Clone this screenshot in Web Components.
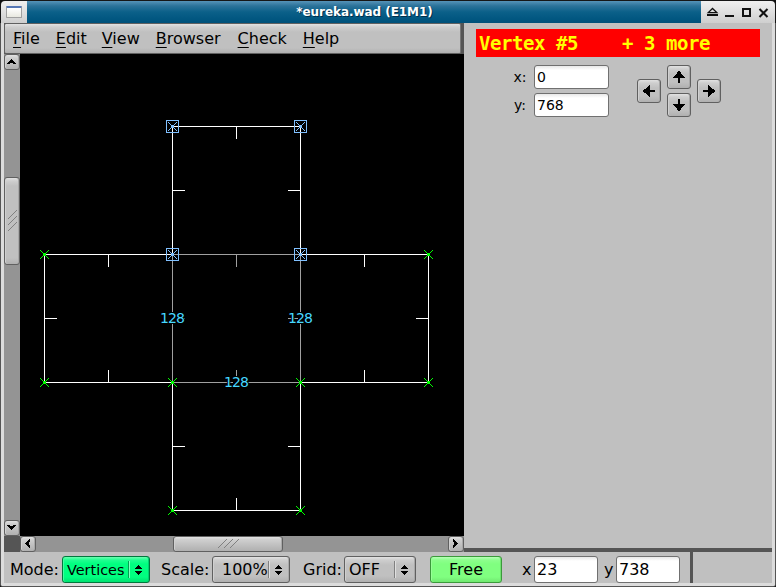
<!DOCTYPE html>
<html lang="en"><head><meta charset="utf-8"><title>Eureka</title>
<style>html,body{margin:0;background:#101010;width:776px;height:587px;overflow:hidden;font-family:"DejaVu Sans",sans-serif}</style>
</head><body><map-window></map-window>
<script>
const define=(name,html,render)=>customElements.define(name,class extends HTMLElement{
  connectedCallback(){
    if(this.shadowRoot)return;
    const root=this.attachShadow({mode:'open'});
    const t=document.createElement('template');
    t.innerHTML='<style>*{box-sizing:border-box}:host{box-sizing:border-box}</style>'+html+(render?render(this):'');
    root.append(t.content.cloneNode(true));
  }
});
// Rows of a tiny bitmap: '#' paints one pixel
const bitmap=(rows,color='#000')=>`<svg width="${rows[0].length}" height="${rows.length}" shape-rendering="crispEdges" style="display:block"><path fill="${color}" d="${rows.map((r,y)=>[...r].map((c,x)=>c==='#'?`M${x} ${y}h1v1h-1z`:'').join('')).join('')}"/></svg>`;
const flip=r=>[...r].reverse();
const mirror=r=>r.map(s=>[...s].reverse().join(''));
const turn=r=>[...r[0]].map((_,x)=>r.map(s=>s[x]).join(''));
const up=['.....##.....','....####....','....####....','...######...','..########..','.##########.','############','.....##.....','.....##.....','.....##.....','.....##.....','.....##.....'];
const tri=['....#....','...###...','..#####..','.#######.','###...###'];
const icons={up,down:flip(up),left:turn(up),right:mirror(turn(up)),
 sup:tri,sdown:flip(tri),sleft:turn(tri),sright:mirror(turn(tri))};

define('px-icon','<style>:host{display:block}</style>',e=>bitmap(icons[e.getAttribute('name')]));

define('soft-button',`<style>
:host{display:flex;align-items:center;justify-content:center;border:1px solid #606060;border-radius:3px;flex:none;
background:linear-gradient(#e2e2e2 0,#cecece 3px,#c0c0c0 8px,#c0c0c0 calc(100% - 6px),#b0b0b0 100%);box-shadow:inset 1px 0 #d0d0d0,inset -1px 0 #a8a8a8}
:host([tone=green]){border-color:#3b9a3b;background:linear-gradient(#b8ffb8 0,#8dff8d 3px,#80ff80 7px,#80ff80 calc(100% - 5px),#70e870 100%);box-shadow:inset 1px 0 #98ff98,inset -1px 0 #70e070}
</style><slot></slot>`);

define('choice-box',`<style>
:host{display:flex;align-items:center;border:1px solid #606060;border-radius:3px;height:27px;flex:none;font-size:16px;
background:linear-gradient(#e2e2e2 0,#cecece 3px,#c0c0c0 8px,#c0c0c0 calc(100% - 6px),#b0b0b0 100%);box-shadow:inset 1px 0 #d0d0d0,inset -1px 0 #a8a8a8}
:host([tone=mint]){border-color:#00783c;background:linear-gradient(#6cffb1 0,#20ff90 3px,#00ff80 7px,#00ff80 calc(100% - 5px),#00e070 100%);box-shadow:inset 1px 0 #40ffa0,inset -1px 0 #00d070;--rule:#00a050;--shine:#80ffc0}
.t{flex:1;white-space:pre}.r{width:2px;height:17px;border-left:1px solid var(--rule,#808080);border-right:1px solid var(--shine,#e0e0e0)}.a{width:19px;display:flex;flex-direction:column;gap:2px;align-items:center;padding-right:2px}
</style><span class="t"><slot></slot></span><i class="r"></i>`,()=>`<span class="a">${bitmap(['...#...','..###..','.#####.','#######'])}${bitmap(['#######','.#####.','..###..','...#...'])}</span>`);

define('text-field',`<style>:host{display:flex;align-items:center;background:linear-gradient(#e8e8e8,#fff 4px);border:1px solid #707070;border-radius:3px;padding-left:2px;flex:none}</style><slot></slot>`);

define('title-bar',`<style>
:host{display:flex;height:23px;border:1px solid #161616;border-bottom:0;border-radius:5px 5px 0 0;overflow:hidden;color:#fff}
.cap{background:linear-gradient(#f0f0f0,#cfcfcf);display:flex;align-items:center}
.i{width:26px;padding-left:5px}.i b{width:16px;height:12px;border:1px solid #a0a0a0;border-top:2px solid #5577b5;border-radius:1px;background:linear-gradient(#fff,#e8e8e0)}
.t{flex:1;background:linear-gradient(#5693b8 0,#2b7299 5px,#0b6089 11px,#00557f 19px,#005079 100%);text-align:center;font:bold 12px/22px "DejaVu Sans",sans-serif;text-shadow:1px 1px #00304c;padding-left:1px;letter-spacing:-.05px}
.w{width:74px}
</style><span class="cap i"><b></b></span><span class="t"><slot></slot></span><span class="cap w"><svg width="74" height="22" fill="none" stroke="#111" stroke-width="2"><path d="M7.2 11.6L11.5 7.5L15.8 11.6Z" stroke-width="1.3"/><path d="M6 14h11M24 15h9M58.500 8l8 8M66.500 8l-8 8"/><path d="M42 8h7v7h-7z"/></svg></span>`);

define('menu-bar',`<style>
:host{display:flex;height:31px;width:457px;font-size:16px;line-height:31px;padding-left:8px;gap:16px;border:1px solid #606060;border-right-color:#777;border-radius:2px;background:linear-gradient(#e2e2e2 0,#cecece 3px,#c0c0c0 8px,#c0c0c0 24px,#b0b0b0 100%)}</style><slot></slot>`);
define('menu-item',`<style>:host{display:block;line-height:29px;flex:none}:host([label=Edit]){margin-right:-1px}:host([label=Browser]){margin-right:1px}u{text-underline-offset:3px;text-decoration-thickness:1px;text-decoration-skip-ink:none}</style>`,e=>{const s=e.getAttribute('label');return `<u>${s[0]}</u>${s.slice(1)}`});

define('scroll-bar',`<style>
:host{display:flex;flex-direction:column;background:#949494;width:16px;height:482px}
:host([horizontal]){flex-direction:row;width:444px;height:16px}
soft-button{width:16px;height:16px}
.track{flex:1;display:flex;flex-direction:column}
:host([horizontal]) .track{flex-direction:row}
.thumb{height:88px;width:16px}:host([horizontal]) .thumb{width:110px;height:16px}
.before{height:107px}:host([horizontal]) .before{width:137px;height:auto}
.end{padding:0 2px 2px 0}
</style>`,e=>{const h=e.hasAttribute('horizontal');const d=h?'M0 9l9-9M6 9l9-9M12 9l9-9':'M0 9l9-9M0 15l9-9M0 21l9-9';return `<soft-button class="end"><px-icon name="${h?'sleft':'sup'}"></px-icon></soft-button><div class="track"><div class="before"></div><soft-button class="thumb"><svg width="${h?21:9}" height="${h?10:22}" stroke="#808080"><path d="${d}"/></svg></soft-button></div><soft-button class="end"><px-icon name="${h?'sright':'sdown'}"></px-icon></soft-button>`});

define('map-canvas','<style>:host{display:block;width:444px;height:482px;background:#000}svg{display:block}text{font:14px "DejaVu Sans",sans-serif;letter-spacing:-.9px;fill:#46d7ff;stroke:#000;stroke-width:2px;paint-order:stroke}</style>',()=>{
  const line=(x1,y1,x2,y2,c='#fff')=>`<rect x="${x1}" y="${y1}" width="${x2-x1+1}" height="${y2-y1+1}" fill="${c}"/>`;
  const g='#a0a0a0';let s='';
  for(const [x,y,c,d] of [[172,126,,1],[44,254,,1],[300,254,,1],[44,382,,-1],[300,382,,-1],[172,510,,-1],[172,254,g,1],[172,382,g,-1]])
    s+=line(x,y,x+128,y,c)+(d>0?line(x+64,y,x+64,y+12,c):line(x+64,y-12,x+64,y,c));
  for(const [x,y,c,d] of [[172,254,g,1],[300,254,g,-1],[172,126,,1],[300,126,,-1],[44,254,,1],[428,254,,-1],[172,382,,1],[300,382,,-1]])
    s+=line(x,y,x,y+128,c)+(d>0?line(x,y+64,x+12,y+64,c):line(x-12,y+64,x,y+64,c));
  const cross=(x,y,c)=>{let p=`<rect x="${x-1}" y="${y-1}" width="3" height="3" fill="${c}"/>`;for(let i=-4;i<=4;i++)p+=`<path fill="${c}" d="M${x+i} ${y+i}h1v1h-1zM${x+i} ${y-i}h1v1h-1z"/>`;return p};
  for(const [x,y] of [[44,254],[428,254],[44,382],[172,382],[300,382],[428,382],[172,510],[300,510]])s+=cross(x,y,'#0f0');
  for(const [x,y] of [[172,126],[300,126],[172,254],[300,254]])s+=cross(x,y,'#80c0ff')+`<rect x="${x-5.5}" y="${y-5.5}" width="12" height="12" fill="none" stroke="#80c0ff"/>`;
  const size=(x,y)=>`<rect x="${x+9}" y="${y-11}" width="15" height="12"/><text x="${x}" y="${y}">128</text>`;
  return `<svg width="444" height="482" viewBox="20 54 444 482"><g shape-rendering="crispEdges">${s}</g>${size(160,323)}${size(288,323)}<rect x="288" y="318" width="2" height="1" fill="#a0a0a0"/><rect x="296" y="318" width="2" height="1" fill="#a0a0a0"/>${size(224,387)}</svg>`});

define('vertex-panel',`<style>
:host{display:block;flex:1;background:#c0c0c0;border-bottom:4px solid #555;padding:6px 12px 0;font-size:14px}
h1{margin:0;height:28px;width:284px;background:#f00;color:#ff0;font:bold 19px/28px "DejaVu Sans Mono",monospace;letter-spacing:-.438px;white-space:pre;padding-left:3px}
.row{display:flex;padding:8px 0 0 22px}.fields{display:grid;grid-template-columns:28px 75px;gap:4px 8px;width:111px}
label{text-align:right;line-height:24px}text-field{height:24px;width:75px}
.pad{display:grid;grid-template-columns:24px 24px 24px;grid-template-rows:14px 10px 4px 10px 14px;column-gap:6px;margin-left:28px}
soft-button{width:24px;height:24px}.l{grid-area:2/1}.u{grid-area:1/2}.d{grid-area:4/2}.r{grid-area:2/3}
</style><h1>Vertex #5    + 3 more</h1><div class="row"><div class="fields"><label style="margin-right:-.5px">x:</label><text-field>0</text-field><label>y:</label><text-field>768</text-field></div>
<div class="pad"><soft-button class="l"><px-icon name="left"></px-icon></soft-button><soft-button class="u"><px-icon name="up"></px-icon></soft-button><soft-button class="d"><px-icon name="down"></px-icon></soft-button><soft-button class="r"><px-icon name="right"></px-icon></soft-button></div></div>`);

define('status-bar',`<style>
:host{display:flex;height:31px;background:#c0c0c0;align-items:flex-end;font-size:16px;padding-left:6px}
label{line-height:27px;flex:none;white-space:pre}text-field{width:64px;height:27px}.free{width:72px;height:27px;margin:0 20px 0 14px}.sep{width:3px;height:31px;background:#555;margin-left:10px}
</style><label style="width:52px">Mode:</label><choice-box tone="mint" style="width:88px;font-size:14.4px;padding-left:4px">Vertices</choice-box>
<label style="width:62px;padding-left:11px">Scale:</label><choice-box style="width:78px;padding-left:9px">100%</choice-box>
<label style="width:54px;padding-left:13px">Grid:</label><choice-box style="width:72px;padding-left:4px">OFF</choice-box>
<soft-button class="free" tone="green">Free</soft-button><label style="width:12px">x</label><text-field>23</text-field><label style="width:18px;padding-left:6px">y</label><text-field>738</text-field><i class="sep"></i>`);

define('map-window',`<style>
:host{display:flex;flex-direction:column;width:776px;height:587px}
.frame{flex:1;display:flex;flex-direction:column;background:#c0c0c0;border:solid #dcdcdc;border-width:0 3px 3px}
.outer{flex:1;display:flex;flex-direction:column;border:1px solid #555;border-top:0;border-radius:0 0 3px 3px;overflow:hidden}
.main{display:flex;height:529px}.left{width:460px;display:grid;grid-template-columns:16px 444px;grid-template-rows:31px 482px 16px}.top{grid-column:1/3;background:#555}.corner{background:#555}
</style><title-bar>*eureka.wad (E1M1)</title-bar><div class="outer"><div class="frame"><div class="main"><div class="left"><div class="top"><menu-bar><menu-item label="File"></menu-item><menu-item label="Edit"></menu-item><menu-item label="View"></menu-item><menu-item label="Browser"></menu-item><menu-item label="Check"></menu-item><menu-item label="Help"></menu-item></menu-bar></div><scroll-bar></scroll-bar><map-canvas></map-canvas><div class="corner"></div><scroll-bar horizontal></scroll-bar></div><vertex-panel></vertex-panel></div><status-bar></status-bar></div></div>`);
</script></body></html>
